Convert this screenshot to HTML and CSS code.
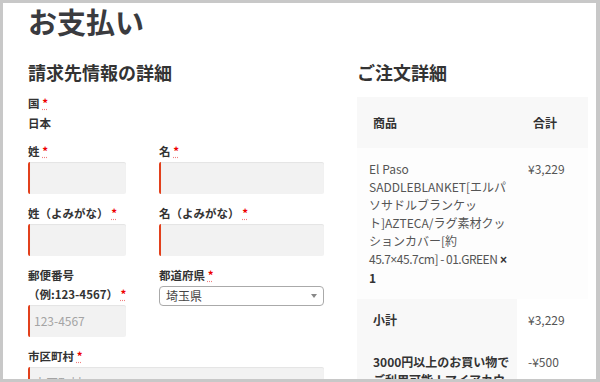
FILE: index.html
```html
<!DOCTYPE html>
<html lang="ja">
<head>
<meta charset="utf-8">
<title>お支払い</title>
<link rel="stylesheet" href="styles.css">
</head>
<body>
<div class="frame">
  <div class="page">
    <h1 class="title">お支払い</h1>
    <div class="cols">
      <section class="billing">
        <h2 class="heading">請求先情報の詳細</h2>
        <div class="field country">
          <label class="label">国 <abbr class="required" title="必須">*</abbr></label>
          <strong class="country-value">日本</strong>
        </div>
        <div class="row">
          <div class="field">
            <label class="label">姓 <abbr class="required" title="必須">*</abbr></label>
            <input class="input" type="text">
          </div>
          <div class="field">
            <label class="label">名 <abbr class="required" title="必須">*</abbr></label>
            <input class="input" type="text">
          </div>
        </div>
        <div class="row">
          <div class="field">
            <label class="label">姓（よみがな） <abbr class="required" title="必須">*</abbr></label>
            <input class="input" type="text">
          </div>
          <div class="field">
            <label class="label">名（よみがな） <abbr class="required" title="必須">*</abbr></label>
            <input class="input" type="text">
          </div>
        </div>
        <div class="row">
          <div class="field">
            <label class="label">郵便番号<span class="nowrap">（例:123-4567） <abbr class="required" title="必須">*</abbr></span></label>
            <input class="input" type="text" placeholder="123-4567">
          </div>
          <div class="field">
            <label class="label">都道府県 <abbr class="required" title="必須">*</abbr></label>
            <div class="select">
              <span class="select-text">埼玉県</span>
              <span class="select-arrow"></span>
            </div>
          </div>
        </div>
        <div class="field">
          <label class="label">市区町村 <abbr class="required" title="必須">*</abbr></label>
          <input class="input" type="text" placeholder="市区町村">
        </div>
      </section>
      <section class="order">
        <h2 class="heading order-heading">ご注文詳細</h2>
        <table class="order-table">
          <colgroup>
            <col class="col-name">
            <col class="col-total">
          </colgroup>
          <thead>
            <tr>
              <th class="head-name">商品</th>
              <th class="head-total">合計</th>
            </tr>
          </thead>
          <tbody>
            <tr>
              <td class="item-name">El Paso SADDLEBLANKET[エルパソサドルブランケット]AZTECA/ラグ素材クッションカバー[約<span class="tight">45.7<span class="latin">×</span>45.7cm] - 01.GREEN</span> <strong class="qty"><span class="latin">×</span> 1</strong></td>
              <td class="item-total">¥3,229</td>
            </tr>
          </tbody>
          <tfoot>
            <tr>
              <th class="foot-name">小計</th>
              <td class="foot-total">¥3,229</td>
            </tr>
            <tr>
              <th class="foot-name">3000円以上のお買い物でご利用可能！マイアカウントからクーポンをご利用ください</th>
              <td class="foot-total">-¥500</td>
            </tr>
          </tfoot>
        </table>
      </section>
    </div>
  </div>
</div>
</body>
</html>
```
FILE: styles.css
```css
html, body {
  margin: 0;
  padding: 0;
  background: #fff;
}

body {
  font-family: "Noto Sans CJK JP", "Noto Sans", sans-serif;
  font-size: 12px;
  color: #555;
}

.frame {
  width: 600px;
  height: 382px;
  box-sizing: border-box;
  border-style: solid;
  border-color: #c8c8c8;
  border-width: 3px 4px 3px 3px;
  overflow: hidden;
  background: #fff;
}

.page {
  padding: 0 8px 0 25px;
}

.title {
  margin: 0;
  font-size: 29px;
  line-height: 36px;
  font-weight: 700;
  color: #3a3b3f;
}

.cols {
  display: grid;
  grid-template-columns: 296px 231px;
  column-gap: 33px;
  margin-top: 21px;
  align-items: start;
}

.heading {
  margin: 0 0 9.5px;
  font-size: 18px;
  line-height: 24px;
  font-weight: 700;
  color: #333;
}

.order-heading {
  margin-bottom: 13px;
}

.field {
  margin-bottom: 10px;
}

.country {
  margin-bottom: 9px;
}

.label {
  display: block;
  font-size: 11.5px;
  line-height: 19px;
  font-weight: 700;
  color: #333;
  margin-bottom: 1px;
}

.nowrap {
  white-space: nowrap;
}

.required {
  color: #e00;
  font-weight: 700;
  text-decoration: underline dotted #f08080;
  border: 0;
}

.country-value {
  display: block;
  margin-top: 1px;
  font-size: 11.5px;
  line-height: 19px;
  font-weight: 700;
  color: #333;
}

.row {
  display: grid;
  grid-template-columns: 98px 165px;
  column-gap: 33px;
  align-items: start;
}

.input {
  display: block;
  width: 100%;
  height: 32px;
  box-sizing: border-box;
  margin: 0;
  border: 0;
  border-left: 2px solid #e2401c;
  border-radius: 2px;
  background: #f2f2f2;
  box-shadow: inset 0 1px 1px rgba(0, 0, 0, 0.06);
  padding: 0 4px;
  font-family: "Noto Sans CJK JP", "Noto Sans", sans-serif;
  font-size: 12px;
  color: #555;
  outline: none;
}

.input::placeholder {
  color: #a4a4a4;
}

.select {
  display: flex;
  align-items: center;
  justify-content: space-between;
  height: 20px;
  box-sizing: border-box;
  border: 1px solid #aaa;
  border-radius: 4px;
  background: #fff;
  padding: 0 6px;
}

.select-text {
  font-size: 12px;
  line-height: 18px;
  color: #444;
}

.select-arrow {
  width: 0;
  height: 0;
  border-left: 3px solid transparent;
  border-right: 3px solid transparent;
  border-top: 4px solid #888;
}

.order-table {
  width: 231px;
  border-collapse: collapse;
  border-spacing: 0;
  table-layout: fixed;
}

.col-name {
  width: 160px;
}

.col-total {
  width: 71px;
}

.order-table th,
.order-table td {
  text-align: left;
  vertical-align: top;
  font-size: 12px;
}

.head-name,
.head-total {
  background: #f8f8f8;
  padding: 16px 8px 16px 16px;
  line-height: 19px;
  font-weight: 700;
  color: #333;
}

.item-name,
.item-total {
  background: #fdfdfd;
  padding: 12px 3px 12px 12px;
  line-height: 18px;
  color: #555;
}

.item-total {
  padding-left: 11px;
  padding-right: 4px;
}

.tight {
  letter-spacing: -0.5px;
}

.latin {
  font-family: "Liberation Sans", "Noto Sans", sans-serif;
}

.qty {
  font-weight: 700;
  color: #333;
}

.foot-name {
  background: #f8f8f8;
  padding: 12px 2px 12px 16px;
  line-height: 18px;
  font-weight: 700;
  color: #333;
}

.foot-total {
  background: #fff;
  padding: 12px 4px 12px 11px;
  line-height: 18px;
  color: #555;
}
```
